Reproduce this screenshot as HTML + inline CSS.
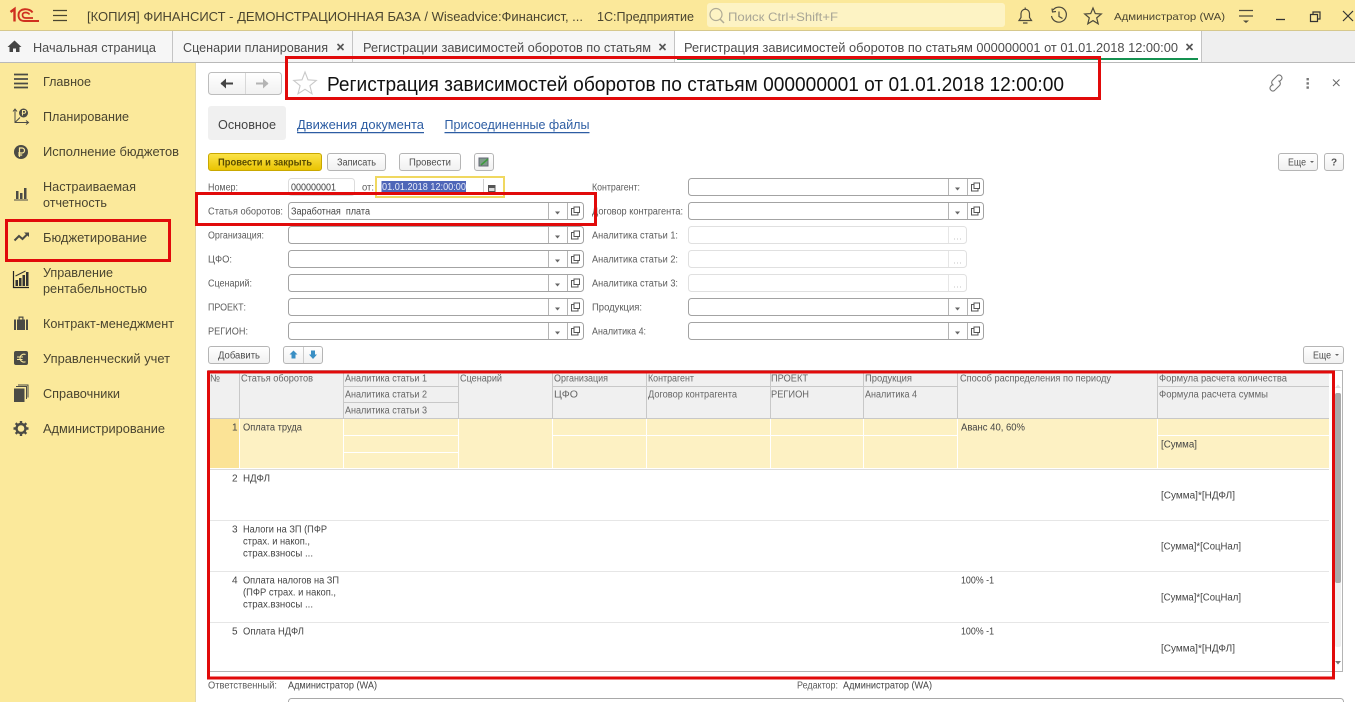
<!DOCTYPE html>
<html lang="ru"><head><meta charset="utf-8"><title>Регистрация зависимостей</title>
<style>
html,body{margin:0;padding:0;background:#fff;overflow:hidden;width:1355px;height:702px}
svg{display:block;position:absolute;left:0;top:0;filter:blur(.3px)}
text{font-family:"Liberation Sans",sans-serif;dominant-baseline:central;white-space:pre;transform:translateY(1px)}
.s{font-size:12.5px;fill:#4a4530}
.tb{font-size:12.5px;fill:#4d4d4d}
.l{font-size:10px;fill:#5c5c5c}
.d{font-size:10px;fill:#444}
.h{font-size:10px;fill:#666}
.b{font-size:10px;fill:#4d4d4d}
.ic{fill:none;stroke:#555;stroke-width:1.2}
.si{fill:#4b4b45}
.red{fill:none;stroke:#e10a0a;stroke-width:3}
</style></head><body>
<svg width="1355" height="702" viewBox="0 0 1355 702" xmlns="http://www.w3.org/2000/svg">
<defs>
<linearGradient id="gy" x1="0" y1="0" x2="0" y2="1"><stop offset="0" stop-color="#fbe34a"/><stop offset="1" stop-color="#e9c300"/></linearGradient>
<linearGradient id="gb" x1="0" y1="0" x2="0" y2="1"><stop offset="0" stop-color="#ffffff"/><stop offset="1" stop-color="#f0f0f0"/></linearGradient>
<g id="fld">
<rect x=".5" y=".5" width="295" height="17" rx="3" fill="#fff" stroke="#a3a3a3"/>
<path d="M260.5 1V17M279.5 1V17" stroke="#b5b5b5" fill="none"/>
<path d="M267 9.5h5l-2.5 3z" fill="#666"/>
<path d="M285.5 6.5h-2v6.500h6.500v-2M286 5h5.500v5.500H286z" fill="none" stroke="#555" stroke-width="1"/>
</g>
<g id="dis">
<rect x=".5" y=".5" width="278" height="17" rx="3" fill="#fff" stroke="#e0e0e0"/>
<path d="M260.500 1V17" stroke="#e6e6e6"/>
<path d="M266 13h1M269 13h1M272 13h1" stroke="#c4c4c4"/>
</g>
</defs>

<!-- top bar -->
<rect width="1355" height="31" fill="#fbe89a"/>
<rect y="30" width="1355" height="1" fill="#d6c88c"/>
<path d="M10.500 12l4-3V21.500" fill="none" stroke="#cf2f1f" stroke-width="2.400"/>
<path d="M32.500 12.500C30 8 18.500 7.500 18.500 15C18.500 20 21.500 21 25 21H39" fill="none" stroke="#cf2f1f" stroke-width="1.900"/>
<path d="M29.500 14.500C28 12 22.500 11.500 22.500 15C22.500 17.500 24.500 18 26 18H33" fill="none" stroke="#cf2f1f" stroke-width="1.700"/>
<path d="M53 10.500h14M53 15.500h14M53 20.500h14" stroke="#4a4530" stroke-width="1.200"/>
<text x="87" y="16" font-size="12.500" fill="#4a4530" textLength="496" lengthAdjust="spacingAndGlyphs">[КОПИЯ] ФИНАНСИСТ - ДЕМОНСТРАЦИОННАЯ БАЗА / Wiseadvice:Финансист, ...</text>
<text x="597" y="16" font-size="12.500" fill="#4a4530" textLength="97" lengthAdjust="spacingAndGlyphs">1С:Предприятие</text>
<rect x="707" y="3" width="298" height="24" rx="3" fill="#fdf3c4"/>
<circle cx="716" cy="14.500" r="6" fill="none" stroke="#b0ab95" stroke-width="1.200"/>
<path d="M720 19l4 4" stroke="#b0ab95" stroke-width="1.500"/>
<text x="728" y="16" font-size="12" fill="#a8a596" textLength="110" lengthAdjust="spacingAndGlyphs">Поиск Ctrl+Shift+F</text>
<g fill="none" stroke="#4d4a3c" stroke-width="1.200">
<path d="M1019 20.500h12.500l-2-3v-4a4.200 4.200 0 0 0-8.500 0v4zM1023 23h4.500M1025.200 9V7.500"/>
<path d="M1053 10a7.500 7.500 0 1 1-1.500 6M1052 8.500l.5 3.500 3.500-.5M1059 11.500v5l3.500 2"/>
<path d="M1093 8l2.300 5.600 6 .4-4.600 3.900 1.500 5.900-5.200-3.200-5.200 3.200 1.500-5.900-4.600-3.900 6-.4z"/>
</g>
<text x="1114" y="16" font-size="10.500" fill="#4a4530" textLength="111" lengthAdjust="spacingAndGlyphs">Администратор (WA)</text>
<path d="M1239 10.500h14M1239 16h14" stroke="#4d4a3c" stroke-width="1.200"/><path d="M1243 20.500h6l-3 2.500z" fill="#4d4a3c"/>
<path d="M1276 19.500h9" stroke="#333" stroke-width="1.300"/>
<path d="M1310.500 14.500h7v7h-7zM1313 14.500v-2.500h7v7h-2.500" fill="none" stroke="#333" stroke-width="1.200"/>
<path d="M1343 11l10 10M1353 11l-10 10" stroke="#333" stroke-width="1.200"/>

<!-- tabs -->
<rect y="31" width="1355" height="31" fill="#efefef"/>
<rect y="31" width="1201" height="31" fill="#f6f6f6"/>
<rect x="675" y="31" width="526" height="31" fill="#fff"/>
<rect y="62" width="1355" height="1" fill="#b9b9b9"/>
<path d="M172.500 31V62M352.500 31V62M674.500 31V62M1201.500 31V62" stroke="#c4c4c4"/>
<rect x="677" y="58" width="521" height="2" fill="#149150"/>
<path d="M14.500 40.500l7 6.500h-2v5h-3.500v-3.500h-3V52H9.500v-5h-2z" fill="#444"/>
<text class="tb" x="33" y="47" textLength="123" lengthAdjust="spacingAndGlyphs">Начальная страница</text>
<text class="tb" x="183" y="47" textLength="145" lengthAdjust="spacingAndGlyphs">Сценарии планирования</text>
<text class="tb" x="363" y="47" textLength="288" lengthAdjust="spacingAndGlyphs">Регистрации зависимостей оборотов по статьям</text>
<text class="tb" x="684" y="47" textLength="494" lengthAdjust="spacingAndGlyphs">Регистрация зависимостей оборотов по статьям 000000001 от 01.01.2018 12:00:00</text>
<path d="M337.500 44l6 6M343.500 44l-6 6M659.500 44l6 6M665.500 44l-6 6M1186.500 44l6 6M1192.500 44l-6 6" stroke="#555" stroke-width="1.600"/>

<!-- sidebar -->
<rect y="63" width="196" height="639" fill="#fbe99b"/>
<rect x="195" y="63" width="1" height="639" fill="#e4d9a8"/>
<text class="s" x="43" y="81" textLength="48" lengthAdjust="spacingAndGlyphs">Главное</text>
<text class="s" x="43" y="116" textLength="86" lengthAdjust="spacingAndGlyphs">Планирование</text>
<text class="s" x="43" y="151" textLength="136" lengthAdjust="spacingAndGlyphs">Исполнение бюджетов</text>
<text class="s" x="43" y="186" textLength="93" lengthAdjust="spacingAndGlyphs">Настраиваемая</text>
<text class="s" x="43" y="202" textLength="64" lengthAdjust="spacingAndGlyphs">отчетность</text>
<text class="s" x="43" y="237" textLength="104" lengthAdjust="spacingAndGlyphs">Бюджетирование</text>
<text class="s" x="43" y="272" textLength="70" lengthAdjust="spacingAndGlyphs">Управление</text>
<text class="s" x="43" y="288" textLength="104" lengthAdjust="spacingAndGlyphs">рентабельностью</text>
<text class="s" x="43" y="323" textLength="131" lengthAdjust="spacingAndGlyphs">Контракт-менеджмент</text>
<text class="s" x="43" y="358" textLength="127" lengthAdjust="spacingAndGlyphs">Управленческий учет</text>
<text class="s" x="43" y="393" textLength="77" lengthAdjust="spacingAndGlyphs">Справочники</text>
<text class="s" x="43" y="428" textLength="122" lengthAdjust="spacingAndGlyphs">Администрирование</text>
<!-- sidebar icons -->
<path d="M14 75h14M14 79.500h14M14 84h14M14 88h14" stroke="#4b4b45" stroke-width="1.800" transform="translate(0,-.5)"/>
<g fill="none" stroke="#4b4b45" stroke-width="1"><path d="M15 109v13.500h13M13 111.500l2-2.500 2 2.500M26 120.500l2.500 2-2.500 2M15 122.500l5-5"/></g>
<circle cx="23.500" cy="113" r="4.500" class="si"/><path d="M22.500 115.500v-5h1.800a1.400 1.400 0 0 1 0 2.800h-2.500" fill="none" stroke="#fbe99b"/>
<circle cx="21" cy="152" r="7" class="si"/><path d="M19.500 157v-9h2.500a2.500 2.500 0 0 1 0 5h-3.800M18.200 155h4" fill="none" stroke="#fbe99b" stroke-width="1.200"/>
<path class="si" d="M16 191h2.500v8H16zM20 193h2.500v6H20zM24 188h2.500v11H24zM14 199.500h14v1H14z"/>
<path d="M14.500 240.500l4.500-4.500 3.500 3 5-5" fill="none" stroke="#4b4b45" stroke-width="2"/><path d="M24 232.500h5v4.500z" class="si"/>
<path d="M13.500 271v16.500H29" fill="none" stroke="#222" stroke-width="1.200"/><path d="M15.500 280h2.500v6h-2.500zM19 278h2.500v8H19zM22.500 275h2.500v11h-2.500zM26 272h2.500v14H26z" fill="#333"/><path d="M15.500 276l10-5" stroke="#333"/>
<path class="si" d="M14 319.500h2v10.500h-2zM17 319.500h8v10.500h-8zM26 319.500h2v10.500h-2zM18.500 316.500h5v3h-1.200v-1.800h-2.600v1.800h-1.200z"/>
<rect x="14" y="351" width="14" height="14" rx="2" class="si"/><path d="M25.500 354.500a4 4 0 0 0-5.500 3.500 4 4 0 0 0 5.500 3.800M17 357h6M17 359.500h5.500" fill="none" stroke="#fbe99b" stroke-width="1.100"/>
<path class="si" d="M14 388.500h10.500V402H14z"/><path d="M16 386.500h10.500v12.500M18 385h10v12.500" fill="none" stroke="#4b4b45"/>
<circle cx="21" cy="428.500" r="4.500" fill="none" stroke="#4b4b45" stroke-width="2.400"/>
<path d="M21 421v3M21 433v3M13.500 428.500h3M25.500 428.500h3M15.700 423.200l2.100 2.100M24.200 431.700l2.100 2.100M15.700 433.800l2.100-2.100M24.200 425.300l2.100-2.100" stroke="#4b4b45" stroke-width="2.400"/>

<!-- nav + title -->
<rect x="208.500" y="72.500" width="73" height="22" rx="3" fill="url(#gb)" stroke="#bdbdbd"/>
<path d="M245.500 73V94" stroke="#d8d8d8"/>
<path d="M221 83.500h12" stroke="#444" stroke-width="2"/><path d="M226 78.500l-5.500 5 5.500 5z" fill="#444"/>
<path d="M256 83.500h12" stroke="#b4b4b4" stroke-width="2"/><path d="M263 78.500l5.500 5-5.500 5z" fill="#b4b4b4"/>
<path d="M305 72l3 7.800 8.300.6-6.400 5.300 2.100 8.100-7-4.500-7 4.500 2.100-8.100-6.400-5.300 8.300-.6z" fill="none" stroke="#c9c9c9" stroke-width="1.100"/>
<text x="327" y="84" font-size="20" fill="#111" textLength="737" lengthAdjust="spacingAndGlyphs">Регистрация зависимостей оборотов по статьям 000000001 от 01.01.2018 12:00:00</text>
<path d="M1273 84l-2.500 2.500a2.900 2.900 0 0 0 4 4l5-5a2.900 2.900 0 0 0-1-4.700M1279 82l2.500-2.500a2.900 2.900 0 0 0-4-4l-5 5a2.900 2.900 0 0 0 1 4.700" fill="none" stroke="#777" stroke-width="1.100"/>
<path d="M1306.500 78h2.400v2.400h-2.400zM1306.500 82.200h2.400v2.400h-2.400zM1306.500 86.400h2.400v2.400h-2.400z" fill="#777"/>
<path d="M1333 79.500l6.500 6.500M1339.500 79.500l-6.500 6.500" stroke="#666"/>

<!-- form tabs -->
<rect x="208" y="106" width="78" height="34" rx="3" fill="#f0f0f0"/>
<text x="218" y="124" font-size="12.500" fill="#444" textLength="58" lengthAdjust="spacingAndGlyphs">Основное</text>
<text x="297" y="124" font-size="12.500" fill="#2d5da3" text-decoration="underline" textLength="127" lengthAdjust="spacingAndGlyphs">Движения документа</text>
<text x="444.500" y="124" font-size="12.500" fill="#2d5da3" text-decoration="underline" textLength="145" lengthAdjust="spacingAndGlyphs">Присоединенные файлы</text>

<!-- command bar -->
<rect x="208.500" y="153.500" width="113" height="17" rx="2.500" fill="url(#gy)" stroke="#c9a800"/>
<text x="218" y="162" font-size="10" font-weight="bold" fill="#5a4c00" textLength="94" lengthAdjust="spacingAndGlyphs">Провести и закрыть</text>
<rect x="327.500" y="153.500" width="58" height="17" rx="2.500" fill="url(#gb)" stroke="#b5b5b5"/>
<text class="b" x="337" y="162" textLength="39" lengthAdjust="spacingAndGlyphs">Записать</text>
<rect x="399.500" y="153.500" width="61" height="17" rx="2.500" fill="url(#gb)" stroke="#b5b5b5"/>
<text class="b" x="409" y="162" textLength="42" lengthAdjust="spacingAndGlyphs">Провести</text>
<rect x="474.500" y="153.500" width="19" height="17" rx="2.500" fill="url(#gb)" stroke="#b5b5b5"/>
<rect x="479" y="158" width="9" height="8" fill="#7f9a8a" stroke="#667"/><path d="M481 165l7-6" stroke="#3d9a3d" stroke-width="1.500"/>
<rect x="1278.500" y="153.500" width="39" height="17" rx="2.500" fill="url(#gb)" stroke="#b5b5b5"/>
<text class="b" x="1288" y="162" textLength="18" lengthAdjust="spacingAndGlyphs">Еще</text><path d="M1310 161h4l-2 2z" fill="#666"/>
<rect x="1324.500" y="153.500" width="19" height="17" rx="2.500" fill="url(#gb)" stroke="#b5b5b5"/>
<text x="1331" y="162" font-size="10" font-weight="bold" fill="#555">?</text>

<!-- left form -->
<text class="l" x="208" y="187" textLength="30" lengthAdjust="spacingAndGlyphs">Номер:</text>
<rect x="288.500" y="178.500" width="66" height="17" rx="3" fill="#fff" stroke="#dcdcdc"/>
<text class="d" x="291" y="187" textLength="45" lengthAdjust="spacingAndGlyphs">000000001</text>
<text class="l" x="362" y="187" textLength="12" lengthAdjust="spacingAndGlyphs">от:</text>
<rect x="376" y="177" width="128" height="20" fill="#fff" stroke="#f0d860" stroke-width="2"/>
<rect x="381.500" y="181" width="84.500" height="11" fill="#4e66b8"/>
<text x="382" y="186.500" font-size="10" fill="#e8ecf8" textLength="84" lengthAdjust="spacingAndGlyphs">01.01.2018 12:00:00</text>
<path d="M483.500 179V195" stroke="#cfcfcf"/>
<path d="M488 185h7.500v7H488z" fill="#555"/><path d="M489 188h5.500v3H489z" fill="#ddd"/>

<text class="l" x="208" y="211" textLength="75" lengthAdjust="spacingAndGlyphs">Статья оборотов:</text>
<text class="l" x="208" y="235" textLength="56" lengthAdjust="spacingAndGlyphs">Организация:</text>
<text class="l" x="208" y="259" textLength="24" lengthAdjust="spacingAndGlyphs">ЦФО:</text>
<text class="l" x="208" y="283" textLength="44" lengthAdjust="spacingAndGlyphs">Сценарий:</text>
<text class="l" x="208" y="307" textLength="38" lengthAdjust="spacingAndGlyphs">ПРОЕКТ:</text>
<text class="l" x="208" y="331" textLength="40" lengthAdjust="spacingAndGlyphs">РЕГИОН:</text>
<use href="#fld" x="288" y="202"/><use href="#fld" x="288" y="226"/><use href="#fld" x="288" y="250"/><use href="#fld" x="288" y="274"/><use href="#fld" x="288" y="298"/><use href="#fld" x="288" y="322"/>
<text class="d" x="291" y="211" textLength="79" lengthAdjust="spacingAndGlyphs">Заработная  плата</text>

<!-- right form -->
<text class="l" x="592" y="187" textLength="48" lengthAdjust="spacingAndGlyphs">Контрагент:</text>
<text class="l" x="592" y="211" textLength="91" lengthAdjust="spacingAndGlyphs">Договор контрагента:</text>
<text class="l" x="592" y="235" textLength="86" lengthAdjust="spacingAndGlyphs">Аналитика статьи 1:</text>
<text class="l" x="592" y="259" textLength="86" lengthAdjust="spacingAndGlyphs">Аналитика статьи 2:</text>
<text class="l" x="592" y="283" textLength="86" lengthAdjust="spacingAndGlyphs">Аналитика статьи 3:</text>
<text class="l" x="592" y="307" textLength="50" lengthAdjust="spacingAndGlyphs">Продукция:</text>
<text class="l" x="592" y="331" textLength="54" lengthAdjust="spacingAndGlyphs">Аналитика 4:</text>
<use href="#fld" x="688" y="178"/><use href="#fld" x="688" y="202"/>
<use href="#dis" x="688" y="226"/><use href="#dis" x="688" y="250"/><use href="#dis" x="688" y="274"/>
<use href="#fld" x="688" y="298"/><use href="#fld" x="688" y="322"/>

<!-- table toolbar -->
<rect x="208.500" y="346.500" width="61" height="17" rx="2.500" fill="url(#gb)" stroke="#b5b5b5"/>
<text class="b" x="218" y="355" textLength="42" lengthAdjust="spacingAndGlyphs">Добавить</text>
<rect x="283.500" y="346.500" width="39" height="17" rx="2.500" fill="url(#gb)" stroke="#b5b5b5"/>
<path d="M303.500 347V363" stroke="#ccc"/>
<path d="M293.500 350.500l4 4h-2v4h-4v-4h-2z" fill="#3a8fc4"/>
<path d="M311 350.500h4v4h2l-4 4.500-4-4.500h2z" fill="#3a8fc4"/>
<rect x="1303.500" y="346.500" width="40" height="17" rx="2.500" fill="url(#gb)" stroke="#b5b5b5"/>
<text class="b" x="1313" y="355" textLength="18" lengthAdjust="spacingAndGlyphs">Еще</text><path d="M1335 354h4l-2 2z" fill="#666"/>

<!-- table -->
<rect x="208.500" y="370.500" width="1134" height="301" fill="#fff" stroke="#b4b4b4"/>
<rect x="209" y="373" width="1120" height="45" fill="#f0f0f0"/>
<rect x="209" y="419" width="1120" height="49" fill="#fdf1c3"/>
<rect x="209" y="419" width="30" height="49" fill="#fbe396"/>
<g fill="none" stroke="#c8c8c8">
<path d="M209 418.500H1329"/>
<path d="M239.500 373V418M343.500 373V418M458.500 373V418M552.500 373V418M646.500 373V418M770.500 373V418M863.500 373V418M957.500 373V418M1157.500 373V418"/>
<path d="M344 386.500H458M344 402.500H458M553 386.500H957M1158 386.500H1329"/>
</g>
<g fill="none" stroke="#fff">
<path d="M239.500 419V468M343.500 419V468M458.500 419V468M552.500 419V468M646.500 419V468M770.500 419V468M863.500 419V468M957.500 419V468M1157.500 419V468"/>
<path d="M344 435.500H458M344 452.500H458M553 435.500H957M1158 435.500H1329"/>
</g>
<path d="M209 469.500H1329" stroke="#dcdcdc"/>
<path d="M209 520.500H1329M209 571.500H1329M209 622.500H1329" stroke="#e6e6e6"/>

<text class="h" x="210" y="378" textLength="10" lengthAdjust="spacingAndGlyphs">№</text>
<text class="h" x="241" y="378" textLength="72" lengthAdjust="spacingAndGlyphs">Статья оборотов</text>
<text class="h" x="345" y="378" textLength="82" lengthAdjust="spacingAndGlyphs">Аналитика статьи 1</text>
<text class="h" x="345" y="394" textLength="82" lengthAdjust="spacingAndGlyphs">Аналитика статьи 2</text>
<text class="h" x="345" y="410" textLength="82" lengthAdjust="spacingAndGlyphs">Аналитика статьи 3</text>
<text class="h" x="460" y="378" textLength="42" lengthAdjust="spacingAndGlyphs">Сценарий</text>
<text class="h" x="554" y="378" textLength="54" lengthAdjust="spacingAndGlyphs">Организация</text>
<text class="h" x="554" y="394" textLength="24" lengthAdjust="spacingAndGlyphs">ЦФО</text>
<text class="h" x="648" y="378" textLength="46" lengthAdjust="spacingAndGlyphs">Контрагент</text>
<text class="h" x="648" y="394" textLength="89" lengthAdjust="spacingAndGlyphs">Договор контрагента</text>
<text class="h" x="771" y="378" textLength="37" lengthAdjust="spacingAndGlyphs">ПРОЕКТ</text>
<text class="h" x="771" y="394" textLength="38" lengthAdjust="spacingAndGlyphs">РЕГИОН</text>
<text class="h" x="865" y="378" textLength="47" lengthAdjust="spacingAndGlyphs">Продукция</text>
<text class="h" x="865" y="394" textLength="52" lengthAdjust="spacingAndGlyphs">Аналитика 4</text>
<text class="h" x="960" y="378" textLength="151" lengthAdjust="spacingAndGlyphs">Способ распределения по периоду</text>
<text class="h" x="1159" y="378" textLength="128" lengthAdjust="spacingAndGlyphs">Формула расчета количества</text>
<text class="h" x="1159" y="394" textLength="109" lengthAdjust="spacingAndGlyphs">Формула расчета суммы</text>

<text class="d" x="232" y="427">1</text><text class="d" x="243" y="427" textLength="59" lengthAdjust="spacingAndGlyphs">Оплата труда</text>
<text class="d" x="232" y="478">2</text><text class="d" x="243" y="478" textLength="27" lengthAdjust="spacingAndGlyphs">НДФЛ</text>
<text class="d" x="232" y="529">3</text><text class="d" x="243" y="529" textLength="84" lengthAdjust="spacingAndGlyphs">Налоги на ЗП (ПФР</text>
<text class="d" x="243" y="541" textLength="67" lengthAdjust="spacingAndGlyphs">страх. и накоп.,</text>
<text class="d" x="243" y="553" textLength="70" lengthAdjust="spacingAndGlyphs">страх.взносы ...</text>
<text class="d" x="232" y="580">4</text><text class="d" x="243" y="580" textLength="96" lengthAdjust="spacingAndGlyphs">Оплата налогов на ЗП</text>
<text class="d" x="243" y="592" textLength="93" lengthAdjust="spacingAndGlyphs">(ПФР страх. и накоп.,</text>
<text class="d" x="243" y="604" textLength="70" lengthAdjust="spacingAndGlyphs">страх.взносы ...</text>
<text class="d" x="232" y="631">5</text><text class="d" x="243" y="631" textLength="61" lengthAdjust="spacingAndGlyphs">Оплата НДФЛ</text>
<text class="d" x="961" y="427" textLength="64" lengthAdjust="spacingAndGlyphs">Аванс 40, 60%</text>
<text class="d" x="961" y="580" textLength="33" lengthAdjust="spacingAndGlyphs">100% -1</text>
<text class="d" x="961" y="631" textLength="33" lengthAdjust="spacingAndGlyphs">100% -1</text>
<text class="d" x="1161" y="444" textLength="36" lengthAdjust="spacingAndGlyphs">[Сумма]</text>
<text class="d" x="1161" y="495" textLength="74" lengthAdjust="spacingAndGlyphs">[Сумма]*[НДФЛ]</text>
<text class="d" x="1161" y="546" textLength="80" lengthAdjust="spacingAndGlyphs">[Сумма]*[СоцНал]</text>
<text class="d" x="1161" y="597" textLength="80" lengthAdjust="spacingAndGlyphs">[Сумма]*[СоцНал]</text>
<text class="d" x="1161" y="648" textLength="74" lengthAdjust="spacingAndGlyphs">[Сумма]*[НДФЛ]</text>

<!-- scrollbar -->
<rect x="1335" y="393" width="6" height="254" rx="2" fill="#f0f0f0"/>
<rect x="1335" y="393" width="6" height="190" rx="2" fill="#a9a9a9"/>
<path d="M1335 661h6l-3 3.500z" fill="#777"/>
<path d="M1335 388h6l-3-3.500z" fill="#e0e0e0"/>

<!-- footer -->
<text class="l" x="208" y="685" textLength="69" lengthAdjust="spacingAndGlyphs">Ответственный:</text>
<text class="d" x="288" y="685" textLength="89" lengthAdjust="spacingAndGlyphs">Администратор (WA)</text>
<text class="l" x="797" y="685" textLength="41" lengthAdjust="spacingAndGlyphs">Редактор:</text>
<text class="d" x="843" y="685" textLength="89" lengthAdjust="spacingAndGlyphs">Администратор (WA)</text>
<rect x="288.500" y="698.500" width="1055" height="20" rx="3" fill="#fff" stroke="#a8a8a8"/>

<!-- red annotations -->
<rect class="red" x="286.500" y="57.500" width="813" height="41"/>
<rect class="red" x="196.500" y="193.500" width="399" height="31"/>
<rect class="red" x="6.500" y="220.500" width="163" height="40"/>
<rect class="red" x="208.500" y="372" width="1125" height="306"/>
</svg>
</body></html>
